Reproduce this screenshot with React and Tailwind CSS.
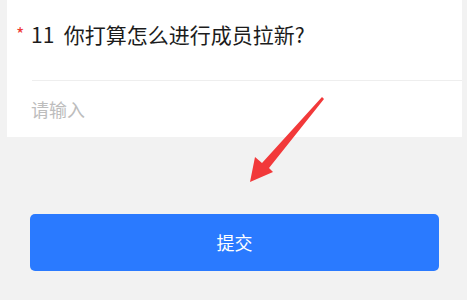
const font = { fontFamily: '"Noto Sans CJK SC", "Noto Sans", sans-serif' };

function Arrow() {
  return (
    <svg className="absolute left-0 top-0 pointer-events-none" width="467" height="300" viewBox="0 0 467 300">
      <polygon
        points="322,97 324,99 269,168 273,172 250,182 255,157 262,163"
        fill="#f2393a"
      />
    </svg>
  );
}

export default function App() {
  return (
    <div className="relative w-[467px] h-[300px] bg-[#f2f2f2] overflow-hidden" style={font}>
      <div className="mx-[7px] w-[455px] h-[137px] bg-white">
        <div className="flex items-center h-[80px] pl-[9px] pb-[11px]">
          <span className="text-[18px] text-[#ee3b36] leading-none w-[15px] mt-[-4px]">*</span>
          <span className="text-[21px] text-[#1c1c1c] leading-none">11&nbsp;&nbsp;你打算怎么进行成员拉新?</span>
        </div>
        <div className="ml-[25px] border-t border-[#eeeeee]" />
        <div className="flex items-center h-[56px] pl-[24px]">
          <span className="text-[18px] text-[#bdbdbd] leading-none">请输入</span>
        </div>
      </div>
      <div className="mt-[77px] ml-[30px] mr-[28px]">
        <button
          type="button"
          className="w-full h-[57px] rounded-[5px] bg-[#2a7aff] text-white text-[18px] flex items-center justify-center"
        >
          提交
        </button>
      </div>
      <Arrow />
    </div>
  );
}
